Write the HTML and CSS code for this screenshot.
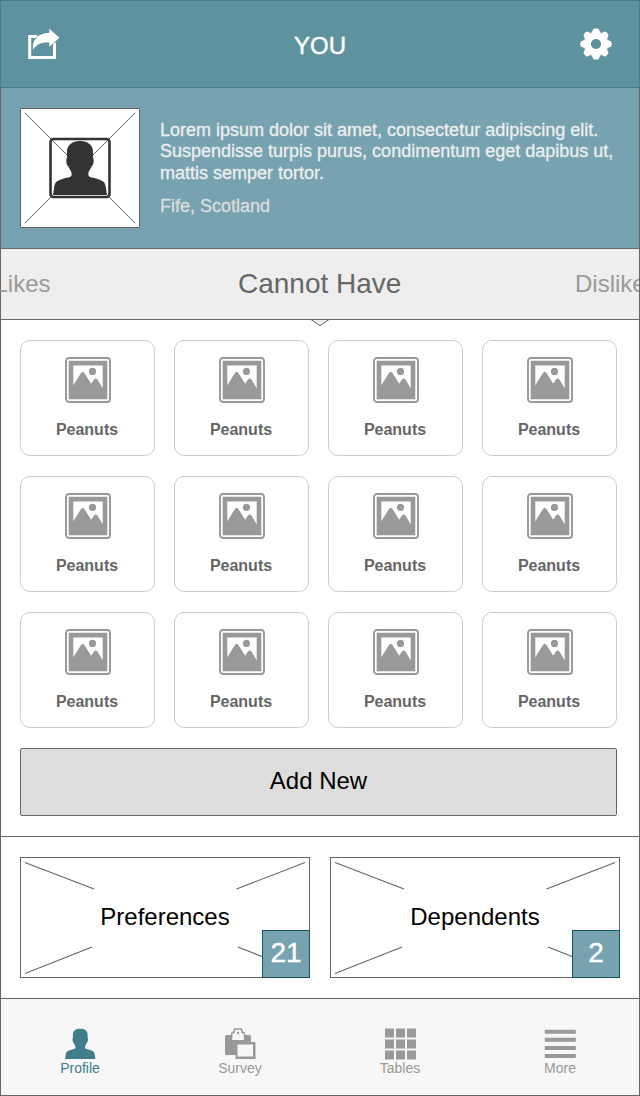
FILE: index.html
```html
<!DOCTYPE html>
<html lang="en">
<head>
<meta charset="utf-8">
<title>You</title>
<link rel="stylesheet" href="styles.css">
</head>
<body>
<svg class="defs" width="0" height="0" aria-hidden="true">
  <symbol id="person" viewBox="0 0 54 54" preserveAspectRatio="none">
    <path d="M27 0C19 0 14 4.500 14 10.500v6.500C12.700 17.500 13.200 25 15.600 25.500C16.200 28.500 18.700 29.500 18.700 33.500C18.500 36.500 15 36.300 11 37.500C4.500 39.500 1.800 40.500 1.200 46.500L0 54H54L52.800 46.500C52.200 40.500 49.500 39.500 43 37.500C39 36.300 35.500 36.500 35.300 33.500C35.300 29.500 37.800 28.500 38.400 25.500C40.800 25 41.300 17.500 40 17V10.500C40 4.500 35 0 27 0z"/>
  </symbol>
  <symbol id="photo" viewBox="0 0 46 46">
    <rect x="1" y="1" width="44" height="44" rx="3" fill="#fff" stroke="#999" stroke-width="1.900"/>
    <path d="M3.700 3.700h38.600v38.600H3.700z" fill="#999"/>
    <path d="M8.300 8.500h29.400v22.800L32.600 22.800Q30.700 20.400 28.800 22.800L26.200 26.800L19.800 16.400Q17.800 13.600 15.700 16.400L8.300 28.300z" fill="#fff"/>
    <circle cx="27.500" cy="14.400" r="3.600" fill="#999"/>
  </symbol>
</svg>
<div class="screen">
  <header class="header">
    <svg class="share" width="32" height="32" viewBox="0 0 32 32">
      <path d="M10.500 8.500H2.700V29.500H27.500V14.500" fill="none" stroke="#fff" stroke-width="3"/>
      <path d="M22.300 .7l10.200 9l-10.200 9v-4.200C15 14.200 10 15.700 6.200 21.700C4.500 12.200 11 5.100 22.300 4.800z" fill="#fff" stroke="#5e929e" stroke-width="1.200" paint-order="stroke"/>
    </svg>
    <h1 class="title">YOU</h1>
    <svg class="gear" width="32" height="32" viewBox="-16 -16 32 32">
      <g fill="#fff">
        <circle r="11.800"/>
        <path id="tooth" d="M-5.200 -10.500Q-3.700 -11.500 -3.100 -14.200Q-2.700 -15.600 -1.300 -15.600H1.300Q2.700 -15.600 3.100 -14.200Q3.700 -11.500 5.200 -10.500z"/>
        <use href="#tooth" transform="rotate(45)"/><use href="#tooth" transform="rotate(90)"/><use href="#tooth" transform="rotate(135)"/><use href="#tooth" transform="rotate(180)"/><use href="#tooth" transform="rotate(225)"/><use href="#tooth" transform="rotate(270)"/><use href="#tooth" transform="rotate(315)"/>
      </g>
      <circle r="5.100" fill="#5e929e"/>
    </svg>
  </header>
  <section class="profile">
    <svg class="avatar" width="120" height="120" viewBox="0 0 120 120">
      <path d="M.5 .5h119v119H.5z" fill="#fff" stroke="#666"/>
      <path d="M5 5L48 48M115 5L72 48M31 89L5 115M89 89L115 115" stroke="#666"/>
      <rect x="30.500" y="31" width="59" height="58" rx="3" fill="none" stroke="#333" stroke-width="2.600"/>
      <use href="#person" x="33" y="33" width="54" height="54" fill="#333"/>
    </svg>
    <div class="bio">
      <p class="about">Lorem ipsum dolor sit amet, consectetur adipiscing elit.<br>Suspendisse turpis purus, condimentum eget dapibus ut,<br>mattis semper tortor.</p>
      <p class="place">Fife, Scotland</p>
    </div>
  </section>
  <nav class="lists">
    <span class="list-prev">Likes</span>
    <span class="list-now">Cannot Have</span>
    <span class="list-next">Dislikes</span>
    <svg class="pointer" width="20" height="8" viewBox="0 0 20 8"><path d="M1 0h18L10 6.700z" fill="#eee"/><path d="M0 .5H20M1 .5L10 6.700L19 .5" fill="none" stroke="#666"/></svg>
  </nav>
  <main class="items">
    <div class="grid">
      <div class="card"><svg width="46" height="46"><use href="#photo"/></svg><span>Peanuts</span></div>
      <div class="card"><svg width="46" height="46"><use href="#photo"/></svg><span>Peanuts</span></div>
      <div class="card"><svg width="46" height="46"><use href="#photo"/></svg><span>Peanuts</span></div>
      <div class="card"><svg width="46" height="46"><use href="#photo"/></svg><span>Peanuts</span></div>
      <div class="card"><svg width="46" height="46"><use href="#photo"/></svg><span>Peanuts</span></div>
      <div class="card"><svg width="46" height="46"><use href="#photo"/></svg><span>Peanuts</span></div>
      <div class="card"><svg width="46" height="46"><use href="#photo"/></svg><span>Peanuts</span></div>
      <div class="card"><svg width="46" height="46"><use href="#photo"/></svg><span>Peanuts</span></div>
      <div class="card"><svg width="46" height="46"><use href="#photo"/></svg><span>Peanuts</span></div>
      <div class="card"><svg width="46" height="46"><use href="#photo"/></svg><span>Peanuts</span></div>
      <div class="card"><svg width="46" height="46"><use href="#photo"/></svg><span>Peanuts</span></div>
      <div class="card"><svg width="46" height="46"><use href="#photo"/></svg><span>Peanuts</span></div>
    </div>
    <button class="add">Add New</button>
  </main>
  <section class="links">
    <a class="tile">
      <svg class="cross" width="288" height="119" viewBox="0 0 288 119"><path d="M4 4.500L73 31M284 4.500L215.500 31M4 115.500L71 89M217 89L284 115.500" stroke="#666" stroke-width="1.100"/></svg>
      <span class="tile-name">Preferences</span><span class="count">21</span>
    </a>
    <a class="tile">
      <svg class="cross" width="288" height="119" viewBox="0 0 288 119"><path d="M4 4.500L73 31M284 4.500L215.500 31M4 115.500L71 89M217 89L284 115.500" stroke="#666" stroke-width="1.100"/></svg>
      <span class="tile-name">Dependents</span><span class="count">2</span>
    </a>
  </section>
  <nav class="tabbar">
    <a class="tab active"><svg width="32" height="32" viewBox="0 0 32 32"><use href="#person" x="1" y=".5" width="30.500" height="30.500" fill="#417e8b"/></svg><span>Profile</span></a>
    <a class="tab"><svg width="32" height="32" viewBox="0 0 32 32" fill="#999">
      <path d="M2.500 7H7v5h14V7h4.500q1.500 0 1.500 1.500V27H2.500Q1 27 1 25.500v-17Q1 7 2.500 7z"/>
      <path d="M7.700 11.500V6q0-1.500 1.500-1.500H10V2.500Q10 1 11.500 1h5Q18 1 18 2.500v2h1q1.500 0 1.500 1.500v5.500z" fill="#f7f7f7" stroke="#999" stroke-width="1.500"/>
      <path d="M8.200 10h11.700v2H8.200z" fill="#f7f7f7"/>
      <circle cx="14" cy="5" r="1.200"/>
      <path d="M11.500 14H31q.5 0 .5.500V31H11.500z"/>
      <path d="M13.500 16.500h15.500v12H13.500z" fill="#f7f7f7"/>
    </svg><span>Survey</span></a>
    <a class="tab"><svg width="32" height="32" viewBox="0 0 32 32" fill="#999">
      <path d="M1 .5h9v9H1zM12 .5h9v9h-9zM23 .5h9v9h-9zM1 11.500h9v9H1zM12 11.500h9v9h-9zM23 11.500h9v9h-9zM1 22.500h9v9H1zM12 22.500h9v9h-9zM23 22.500h9v9h-9z"/>
    </svg><span>Tables</span></a>
    <a class="tab"><svg width="32" height="32" viewBox="0 0 32 32" fill="#999">
      <path d="M.8 1.800h31v4h-31zM.8 9.800h31v4h-31zM.8 18h31v4h-31zM.8 26.100h31v4h-31z"/>
    </svg><span>More</span></a>
  </nav>
</div>
</body>
</html>
```
FILE: styles.css
```css
* { box-sizing: border-box; }
body {
  margin: 0;
  font-family: "Liberation Sans", Arial, sans-serif;
  background: #fff;
}
.defs { display: none; }
svg { display: block; flex: none; }
.screen {
  width: 640px;
  height: 1096px;
  display: flex;
  flex-direction: column;
  overflow: hidden;
}
.header {
  height: 88px;
  flex: none;
  display: grid;
  grid-template-columns: 32px 1fr 32px;
  align-items: center;
  padding: 0 27px 0 26px;
  background: #5e929e;
  border: 1px solid #417e8b;
}
.share { overflow: visible; }
.title {
  margin: 3px 0 0 1px;
  font-size: 24px;
  font-weight: 400;
  line-height: 28px;
  text-align: center;
  color: #fff;
  -webkit-text-stroke: 0.4px #fff;
}
.profile {
  height: 161px;
  flex: none;
  display: flex;
  gap: 20px;
  padding: 20px 0 0 19px;
  background: #76a3af;
  border: solid #666;
  border-width: 0 1px 1px;
}
.bio { padding-top: 11.700px; font-size: 18px; white-space: nowrap; }
.about {
  margin: 0 0 11px;
  line-height: 21.500px;
  color: #eee;
  -webkit-text-stroke: 0.3px #eee;
}
.place {
  margin: 0;
  line-height: 22px;
  color: #ddd;
  -webkit-text-stroke: 0.3px #ddd;
}
.lists {
  position: relative;
  height: 71px;
  flex: none;
  display: grid;
  grid-template-columns: 1fr 164px 1fr;
  align-items: center;
  background: #eee;
  border: solid #666;
  border-width: 0 1px 1px;
  color: #999;
  font-size: 24px;
  white-space: nowrap;
}
.list-prev { margin-left: -6.500px; }
.list-now { font-size: 28px; color: #666; }
.list-next { padding-left: 173px; overflow: hidden; }
.pointer {
  position: absolute;
  left: 309px;
  top: 70px;
}
.items {
  height: 517px;
  flex: none;
  padding: 20px 22px 0 19px;
  border: solid #666;
  border-width: 0 1px 1px;
}
.grid {
  display: grid;
  grid-template-columns: repeat(4, 135px);
  gap: 20px 19px;
}
.card {
  height: 116px;
  display: flex;
  flex-direction: column;
  align-items: center;
  padding-top: 16px;
  border: 1px solid #ccc;
  border-radius: 10px;
  font-size: 16px;
  font-weight: 700;
  line-height: 18px;
  color: #666;
}
.card span { margin-top: 18px; margin-right: 1px; }
.card svg { margin-left: 1px; }
.add {
  display: block;
  width: 597px;
  height: 68px;
  margin-top: 20px;
  padding: 0 0 2px;
  background: #ddd;
  border: 1px solid #666;
  border-radius: 2px;
  font: 24px "Liberation Sans", Arial, sans-serif;
  color: #000;
}
.links {
  height: 162px;
  flex: none;
  display: flex;
  gap: 20px;
  padding: 20px 19px 0;
  border: solid #666;
  border-width: 0 1px 1px;
}
.tile {
  position: relative;
  width: 290px;
  height: 121px;
  display: grid;
  place-items: center;
  padding-bottom: 2px;
  border: 1px solid #666;
  font-size: 24px;
}
.cross { position: absolute; left: 0; top: 0; }
.count {
  position: absolute;
  right: -1px;
  bottom: -1px;
  width: 48px;
  height: 48px;
  background: #76a3af;
  border: 1px solid #135766;
  color: #fff;
  font-size: 28px;
  line-height: 43px;
  text-align: center;
  -webkit-text-stroke: 0.4px #fff;
}
.tabbar {
  height: 97px;
  flex: none;
  display: grid;
  grid-template-columns: repeat(4, 160px);
  margin: 0;
  padding-top: 29px;
  background: #f7f7f7;
  border: solid #666;
  border-width: 0 1px 1px;
}
.tab {
  display: flex;
  flex-direction: column;
  align-items: center;
  margin-left: -2px;
  font-size: 14px;
  line-height: 16px;
  color: #999;
}
.active { color: #417e8b; }
```
